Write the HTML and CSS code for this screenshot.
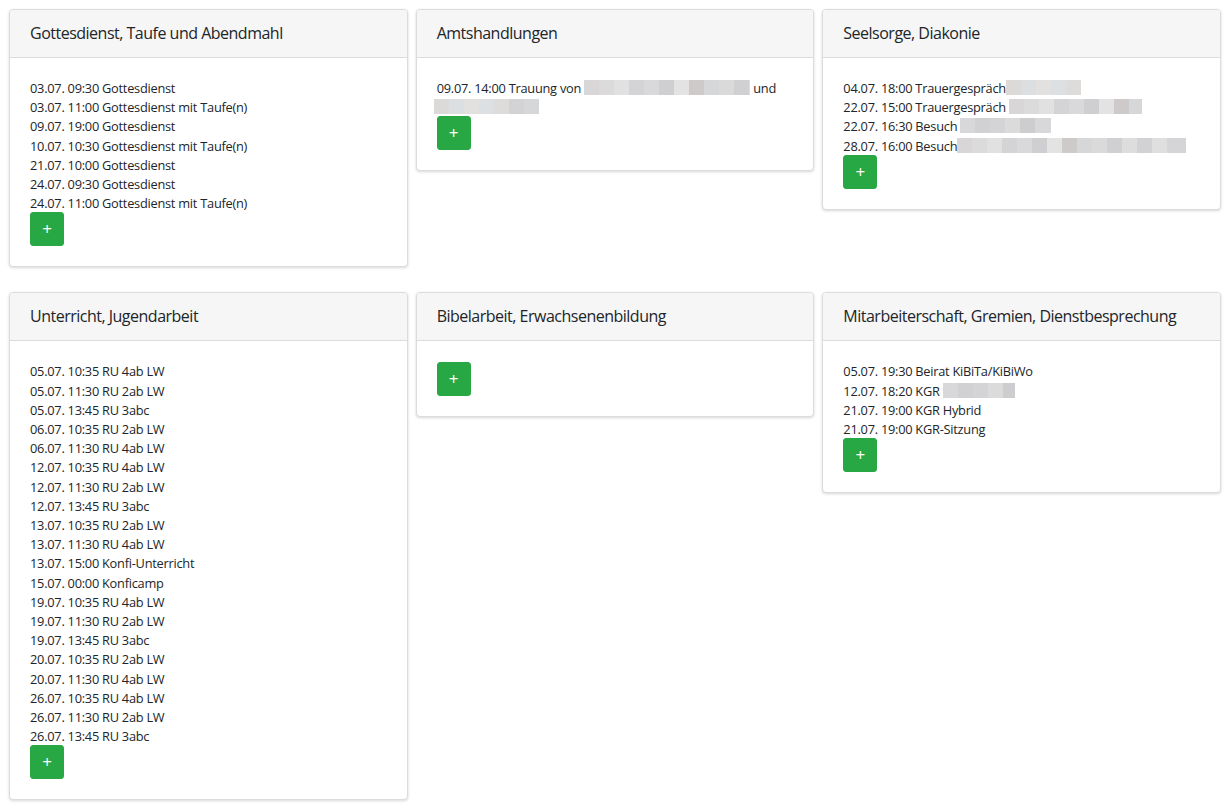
FILE: index.html
```html
<!DOCTYPE html>
<html lang="de">
<head>
<meta charset="utf-8">
<title>Planung</title>
<link rel="stylesheet" href="styles.css">
</head>
<body>
<div class="board">
  <section class="card">
    <header class="card-header">Gottesdienst, Taufe und Abendmahl</header>
    <div class="card-body">
      <ul class="entries">
        <li>03.07. 09:30 Gottesdienst</li>
        <li>03.07. 11:00 Gottesdienst mit Taufe(n)</li>
        <li>09.07. 19:00 Gottesdienst</li>
        <li>10.07. 10:30 Gottesdienst mit Taufe(n)</li>
        <li>21.07. 10:00 Gottesdienst</li>
        <li>24.07. 09:30 Gottesdienst</li>
        <li>24.07. 11:00 Gottesdienst mit Taufe(n)</li>
      </ul>
      <button class="add" type="button">+</button>
    </div>
  </section>

  <section class="card">
    <header class="card-header">Amtshandlungen</header>
    <div class="card-body">
      <ul class="entries">
        <li>09.07. 14:00 Trauung von <span class="blur b1" style="width:166px"></span> und <span class="blur b2 shift" style="width:105px"></span></li>
      </ul>
      <button class="add" type="button">+</button>
    </div>
  </section>

  <section class="card">
    <header class="card-header">Seelsorge, Diakonie</header>
    <div class="card-body">
      <ul class="entries">
        <li>04.07. 18:00 Trauergespräch<span class="blur b2" style="width:75px"></span></li>
        <li>22.07. 15:00 Trauergespräch <span class="blur b1" style="width:133px"></span></li>
        <li>22.07. 16:30 Besuch <span class="blur b3" style="width:91px"></span></li>
        <li>28.07. 16:00 Besuch<span class="blur b1" style="width:229px"></span></li>
      </ul>
      <button class="add" type="button">+</button>
    </div>
  </section>

  <section class="card">
    <header class="card-header">Unterricht, Jugendarbeit</header>
    <div class="card-body">
      <ul class="entries">
        <li>05.07. 10:35 RU 4ab LW</li>
        <li>05.07. 11:30 RU 2ab LW</li>
        <li>05.07. 13:45 RU 3abc</li>
        <li>06.07. 10:35 RU 2ab LW</li>
        <li>06.07. 11:30 RU 4ab LW</li>
        <li>12.07. 10:35 RU 4ab LW</li>
        <li>12.07. 11:30 RU 2ab LW</li>
        <li>12.07. 13:45 RU 3abc</li>
        <li>13.07. 10:35 RU 2ab LW</li>
        <li>13.07. 11:30 RU 4ab LW</li>
        <li>13.07. 15:00 Konfi-Unterricht</li>
        <li>15.07. 00:00 Konficamp</li>
        <li>19.07. 10:35 RU 4ab LW</li>
        <li>19.07. 11:30 RU 2ab LW</li>
        <li>19.07. 13:45 RU 3abc</li>
        <li>20.07. 10:35 RU 2ab LW</li>
        <li>20.07. 11:30 RU 4ab LW</li>
        <li>26.07. 10:35 RU 4ab LW</li>
        <li>26.07. 11:30 RU 2ab LW</li>
        <li>26.07. 13:45 RU 3abc</li>
      </ul>
      <button class="add" type="button">+</button>
    </div>
  </section>

  <section class="card">
    <header class="card-header">Bibelarbeit, Erwachsenenbildung</header>
    <div class="card-body">
      <button class="add" type="button">+</button>
    </div>
  </section>

  <section class="card">
    <header class="card-header">Mitarbeiterschaft, Gremien, Dienstbesprechung</header>
    <div class="card-body">
      <ul class="entries">
        <li>05.07. 19:30 Beirat KiBiTa/KiBiWo</li>
        <li>12.07. 18:20 KGR <span class="blur b3" style="width:72px"></span></li>
        <li>21.07. 19:00 KGR Hybrid</li>
        <li>21.07. 19:00 KGR-Sitzung</li>
      </ul>
      <button class="add" type="button">+</button>
    </div>
  </section>
</div>
</body>
</html>
```

FILE: styles.css
```css
* { box-sizing: border-box; }

html, body {
  margin: 0;
  padding: 0;
  background: #ffffff;
}

body {
  font-family: "Open Sans", "Noto Sans", sans-serif;
  color: #212529;
  font-size: 16px;
  line-height: 1.5;
}

.board {
  display: grid;
  grid-template-columns: repeat(3, 1fr);
  column-gap: 8px;
  row-gap: 25px;
  padding: 9px;
  align-items: start;
}

.card {
  background: #fff;
  border: 1px solid #dcdcdc;
  border-radius: 4px;
  box-shadow: 0 1px 3px rgba(0, 0, 0, 0.16);
  overflow: hidden;
}

.card-header {
  background: #f6f6f6;
  border-bottom: 1px solid #dcdcdc;
  padding: 11px 20px 12px;
  font-size: 16px;
  line-height: 24px;
  letter-spacing: -0.5px;
}

.card-body {
  padding: 21px 20px 20px;
}

.entries {
  list-style: none;
  margin: 0 0 -1px;
  padding: 0;
  font-size: 12.8px;
  line-height: 19.2px;
  letter-spacing: -0.25px;
}

.blur {
  display: inline-block;
  height: 15px;
  vertical-align: -2px;
}

.blur.shift { margin-left: -3px; }

.b1 {
  background: linear-gradient(90deg,
    #d8d6d7 0 15px, #dcdbdc 15px 30px, #e2e1e1 30px 45px, #d4d3d5 45px 60px,
    #d9d9db 60px 75px, #cfcfd1 75px 90px, #e3e3e3 90px 105px, #cdcac9 105px 120px,
    #d6d7d9 120px 135px, #dbdadb 135px 150px, #d0d0d2 150px 165px, #dedddd 165px 180px,
    #d2d2d4 180px 195px, #e0dfe0 195px 210px, #d5d5d7 210px 229px);
}

.b2 {
  background: linear-gradient(90deg,
    #dcdad9 0 15px, #dcdfe1 15px 30px, #e3e1df 30px 45px, #dde0e3 45px 60px,
    #dddcdb 60px 75px, #d3d2d4 75px 90px, #d6d7d9 90px 105px);
}

.b3 {
  background: linear-gradient(90deg,
    #d8d7d9 0 15px, #d1d0d2 15px 30px, #d4d4d6 30px 45px, #dbdbdc 45px 60px,
    #cdcdcf 60px 75px, #d8d8da 75px 91px);
}

.add {
  display: block;
  width: 34px;
  height: 34px;
  padding: 0;
  border: 1px solid #28a745;
  border-radius: 3px;
  background: #28a745;
  color: #fff;
  font-family: "Open Sans", "Noto Sans", sans-serif;
  font-size: 17px;
  line-height: 30px;
  text-align: center;
}
```
